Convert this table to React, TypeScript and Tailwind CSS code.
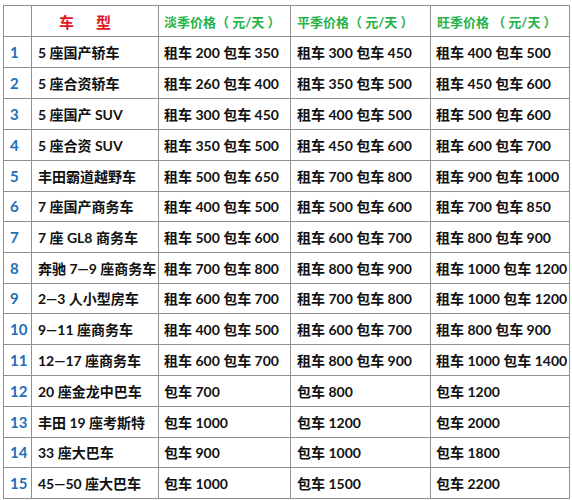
import React from "react";

const rows: [string, string, string, string][] = [
  ["5 座国产轿车", "租车 200 包车 350", "租车 300 包车 450", "租车 400 包车 500"],
  ["5 座合资轿车", "租车 260 包车 400", "租车 350 包车 500", "租车 450 包车 600"],
  ["5 座国产 SUV", "租车 300 包车 450", "租车 400 包车 500", "租车 500 包车 600"],
  ["5 座合资 SUV", "租车 350 包车 500", "租车 450 包车 600", "租车 600 包车 700"],
  ["丰田霸道越野车", "租车 500 包车 650", "租车 700 包车 800", "租车 900 包车 1000"],
  ["7 座国产商务车", "租车 400 包车 500", "租车 500 包车 600", "租车 700 包车 850"],
  ["7 座 GL8 商务车", "租车 500 包车 600", "租车 600 包车 700", "租车 800 包车 900"],
  ["奔驰 7—9 座商务车", "租车 700 包车 800", "租车 800 包车 900", "租车 1000 包车 1200"],
  ["2—3 人小型房车", "租车 600 包车 700", "租车 700 包车 800", "租车 1000 包车 1200"],
  ["9—11 座商务车", "租车 400 包车 500", "租车 600 包车 700", "租车 800 包车 900"],
  ["12—17 座商务车", "租车 600 包车 700", "租车 800 包车 900", "租车 1000 包车 1400"],
  ["20 座金龙中巴车", "包车 700", "包车 800", "包车 1200"],
  ["丰田 19 座考斯特", "包车 1000", "包车 1200", "包车 2000"],
  ["33 座大巴车", "包车 900", "包车 1000", "包车 1800"],
  ["45—50 座大巴车", "包车 1000", "包车 1500", "包车 2200"],
];

const heights = ["h-[31px]", "h-[31px]", "h-[31px]", "h-[31px]", "h-[31px]", "h-[30px]", "h-[31px]", "h-[31px]", "h-[30px]", "h-[31px]", "h-[31px]", "h-[31px]", "h-[31px]", "h-[30px]", "h-[31px]"];

const cell = "flex items-center border-r border-b border-[#8f8f8f] pl-[5px] whitespace-nowrap";
const head = "pt-[3px] text-[13px] text-[#25b24a]";

export default function App() {
  return (
    <div className="h-[500px] w-[572px] bg-white pt-[5px] pl-[3px] font-['Lato','Noto_Sans_CJK_SC',sans-serif] font-bold text-[14px] text-[#111]">
      <div className="grid w-[567px] grid-cols-[28px_127px_132px_140px_139px] border-t border-l border-[#8f8f8f]">
        <div className={`${cell} h-[31px]`} />
        <div className={`${cell} h-[31px] pl-[27px] pt-[3px] text-[15px] text-[#e3141b]`}>
          <span>车</span>
          <span className="ml-[22px]">型</span>
        </div>
        <div className={`${cell} h-[31px] ${head}`}>淡季价格（ 元/天 ）</div>
        <div className={`${cell} h-[31px] pl-[6px] ${head}`}>平季价格（ 元/天 ）</div>
        <div className={`${cell} h-[31px] pl-[6px] ${head}`}>旺季价格 （ 元/天 ）</div>

        {rows.map((r, i) => (
          <React.Fragment key={i}>
            <div className={`${cell} ${heights[i]} pl-[6px] text-[15px] text-[#1f6fb8]`}>{i + 1}</div>
            <div className={`${cell} ${heights[i]} pl-[6px]`}>{r[0]}</div>
            <div className={`${cell} ${heights[i]}`}>{r[1]}</div>
            <div className={`${cell} ${heights[i]} pl-[6px]`}>{r[2]}</div>
            <div className={`${cell} ${heights[i]}`}>{r[3]}</div>
          </React.Fragment>
        ))}
      </div>
    </div>
  );
}
